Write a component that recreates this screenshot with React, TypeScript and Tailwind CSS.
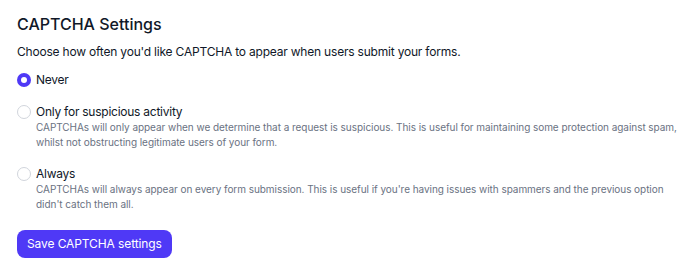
const options = [
  { id: "never", label: "Never", lines: [] as string[] },
  {
    id: "suspicious",
    label: "Only for suspicious activity",
    lines: [
      "CAPTCHAs will only appear when we determine that a request is suspicious. This is useful for maintaining some protection against spam,",
      "whilst not obstructing legitimate users of your form.",
    ],
  },
  {
    id: "always",
    label: "Always",
    lines: [
      "CAPTCHAs will always appear on every form submission. This is useful if you're having issues with spammers and the previous option",
      "didn't catch them all.",
    ],
  },
]

function Radio({ checked }: { checked: boolean }) {
  if (checked) {
    return (
      <span className="flex h-[14px] w-[14px] shrink-0 items-center justify-center rounded-full bg-indigo-600">
        <span className="h-[6px] w-[6px] rounded-full bg-white" />
      </span>
    )
  }
  return <span className="h-[14px] w-[14px] shrink-0 rounded-full border border-gray-300 bg-white" />
}

export default function App() {
  const selected = "never"

  return (
    <div className="min-h-screen bg-white px-[17px] pt-3 font-['Inter',sans-serif] antialiased">
      <h2 className="text-base leading-6 font-medium text-gray-900">CAPTCHA Settings</h2>
      <p className="mt-[6px] text-xs leading-5 tracking-[-0.2px] text-gray-900">
        Choose how often you'd like CAPTCHA to appear when users submit your forms.
      </p>

      <div className="mt-[10px] flex flex-col gap-4">
        {options.map((opt) => (
          <div key={opt.id} className="flex items-start gap-[5px]">
            <div className="flex h-4 items-center">
              <Radio checked={opt.id === selected} />
            </div>
            <div>
              <div className="text-xs leading-4 tracking-[-0.25px] text-gray-900">{opt.label}</div>
              {opt.lines.map((line) => (
                <div
                  key={line}
                  className="text-[10px] leading-[15px] tracking-[-0.05px] whitespace-nowrap text-gray-500"
                >
                  {line}
                </div>
              ))}
            </div>
          </div>
        ))}
      </div>

      <button className="mt-[18px] rounded-lg bg-indigo-600 px-[10px] py-[6px] text-xs leading-4 tracking-[-0.1px] text-white">
        Save CAPTCHA settings
      </button>
    </div>
  )
}
